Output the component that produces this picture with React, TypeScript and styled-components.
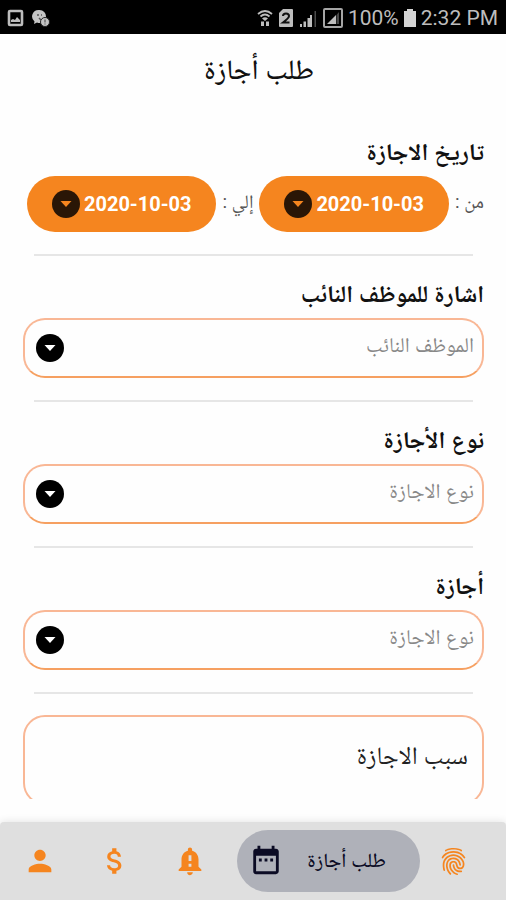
import React from "react";
import styled, { createGlobalStyle } from "styled-components";
import { MdAttachMoney, MdDateRange, MdNotificationImportant, MdPerson } from "react-icons/md";
import { IoFingerPrint } from "react-icons/io5";

const orange = "#f5851f";
const fontStack = `Roboto, "Noto Naskh Arabic", "Noto Sans Arabic", "DejaVu Sans", sans-serif`;

const GlobalStyle = createGlobalStyle`
  *, *::before, *::after { box-sizing: border-box; }
  body { margin: 0; background: #fefefe; font-family: ${fontStack}; color: #111; }
  button, select, textarea { font-family: inherit; margin: 0; }
`;

const Screen = styled.div`
  display: flex;
  flex-direction: column;
  height: 100vh;
  overflow: hidden;
`;

const StatusBar = styled.div`
  flex: none;
  display: flex;
  align-items: center;
  justify-content: space-between;
  height: 34px;
  padding: 2px 8px 0 7px;
  background: #000;
  color: #bdbdbd;
  font-size: 21px;
  line-height: 24px;
`;

const StatusGroup = styled.div<{ $gap: number }>`
  display: flex;
  align-items: center;
  gap: ${(p) => p.$gap}px;
  white-space: nowrap;
  svg { display: block; flex: none; }
`;

const Header = styled.header`
  flex: none;
  padding: 16px 16px 24px 28px;
  text-align: center;
`;

const Title = styled.h1`
  margin: 0;
  font-size: 28px;
  font-weight: 500;
  line-height: 40px;
`;

const Form = styled.main`
  flex: 1;
  min-height: 0;
  overflow-y: auto;
  scrollbar-width: none;
  padding: 0 22px 0 23px;
  margin-bottom: 23px;
`;

const Section = styled.section`
  display: flex;
  flex-direction: column;
  padding-top: 18px;
`;

const Label = styled.label`
  margin-bottom: 4px;
  font-size: 24px;
  font-weight: 700;
  line-height: 40px;
`;

const Divider = styled.hr`
  width: calc(100% - 22px);
  height: 2px;
  margin: 22px auto 0;
  border: 0;
  background: #e6e6e6;
`;

const DateRow = styled.div`
  display: flex;
  align-items: center;
  gap: 6px;
  padding-left: 4px;
`;

const DateLabel = styled.label`
  flex: none;
  padding-bottom: 4px;
  font-size: 19px;
  line-height: 24px;
  color: #555;
`;

const DateButton = styled.button`
  flex: 1;
  display: flex;
  align-items: center;
  justify-content: center;
  gap: 4px;
  direction: ltr;
  height: 56px;
  padding: 0;
  border: 0;
  border-radius: 28px;
  background: ${orange};
  color: #fff;
  font-size: 20px;
  font-weight: 700;
  white-space: nowrap;
`;

const Field = styled.div`
  display: grid;
  align-items: center;
  > * { grid-area: 1 / 1; }
  > svg { justify-self: end; margin-left: 13px; pointer-events: none; }
`;

const Select = styled.select`
  appearance: none;
  width: 100%;
  height: 60px;
  padding: 0 8px 6px 52px;
  border: 2px solid #f9b795;
  border-bottom-color: #f6a061;
  border-radius: 22px;
  background: #fefefe;
  color: #888;
  font-size: 21px;
  line-height: 40px;
`;

const Reason = styled.textarea`
  display: block;
  width: 100%;
  height: 90px;
  margin-top: 21px;
  padding: 21px 14px;
  border: 2px solid #f9b795;
  border-radius: 22px;
  background: #fefefe;
  resize: none;
  font-size: 25px;
  line-height: 36px;
  &::placeholder { color: #222; opacity: 1; }
`;

const NavBar = styled.nav`
  flex: none;
  display: flex;
  align-items: center;
  justify-content: space-between;
  height: 78px;
  padding: 0 38px 0 23px;
  border-radius: 4px 4px 0 0;
  background: #dfdfdf;
  box-shadow: 0 0 8px rgba(0, 0, 0, 0.12);
  direction: ltr;
`;

const NavGroup = styled.div<{ $gap: number }>`
  display: flex;
  align-items: center;
  gap: ${(p) => p.$gap}px;
`;

const NavButton = styled.button`
  display: flex;
  padding: 0;
  border: 0;
  background: none;
  color: ${orange};
`;

const ActiveTab = styled.button`
  display: flex;
  align-items: center;
  gap: 24px;
  height: 62px;
  padding: 0 34px 2px 12px;
  border: 0;
  border-radius: 31px;
  background: #afb1b9;
  color: #0b0b24;
  font-size: 20px;
  font-weight: 500;
  line-height: 28px;
  white-space: nowrap;
`;

const Arrow = ({ disc = "#000", fill = "#fff" }: { disc?: string; fill?: string }) => (
  <svg width="28" height="28" viewBox="0 0 28 28" aria-hidden="true">
    <circle cx="14" cy="14" r="14" fill={disc} />
    <path d="M8.5 11h11L14 17z" fill={fill} />
  </svg>
);

const SelectField = ({ id, label, hint }: { id: string; label: string; hint: string }) => (
  <Section>
    <Label htmlFor={id}>{label}</Label>
    <Field>
      <Select id={id} defaultValue="">
        <option value="">{hint}</option>
      </Select>
      <Arrow />
    </Field>
    <Divider />
  </Section>
);

const PictureIcon = () => (
  <svg width="17" height="18" viewBox="0 0 17 18">
    <rect x="2" y="2" width="13" height="14" rx="1" fill="none" stroke="#bdbdbd" strokeWidth="2.6" />
    <path d="M4 13v-2l2-1 2 1 2-3 3 3v2z" fill="#bdbdbd" />
  </svg>
);

const ChatIcon = () => (
  <svg width="18" height="18" viewBox="0 0 18 18">
    <path d="M7 1a6.5 6.5 0 0 0-4.500 11.500L2 15l3-1.500A6.500 6.500 0 1 0 7 1z" fill="#c4c4c4" />
    <path d="M5 6h2M9 6h1M7 9l2 2" stroke="#555" strokeWidth="1.500" />
    <circle cx="13" cy="13" r="4.500" fill="#c4c4c4" stroke="#222" strokeWidth="1" />
    <path d="M13 10.500v3M13 14.500v1" stroke="#555" strokeWidth="1.200" />
  </svg>
);

const WifiIcon = () => (
  <svg width="16" height="18" viewBox="0 0 16 18" fill="none" stroke="#bdbdbd">
    <path d="M1 5q7-6 14 0M3.500 7.500q4.500-4 9 0" strokeWidth="1.800" />
    <path d="M5 9.500q3-2.500 6 0L8 12z" fill="#bdbdbd" stroke="none" />
    <path d="M5.500 12.500V17M10.500 12.500V17" strokeWidth="3" />
  </svg>
);

const SimIcon = () => (
  <svg width="14" height="18" viewBox="0 0 14 18">
    <path d="M4 0h9a1 1 0 0 1 1 1v16a1 1 0 0 1-1 1H1a1 1 0 0 1-1-1V4z" fill="#bdbdbd" />
    <path d="M4 7q0-2.500 3-2.500t3 2.500q0 2-6 6.500h6.500" fill="none" stroke="#111" strokeWidth="2" />
  </svg>
);

const SignalIcon = () => (
  <svg width="18" height="17" viewBox="0 0 18 17" fill="#bdbdbd">
    <path d="M1 14h2v3H1zM4.500 11.500h2.500V17H4.500zM8.500 8H11v9H8.500z" />
    <path d="M11 5h2v12h-2z" />
    <path d="M15.500 1H17v16h-1.500z" fill="#4a4a4a" />
  </svg>
);

const BoxedSignalIcon = () => (
  <svg width="20" height="20" viewBox="0 0 20 20">
    <rect x="1" y="1" width="18" height="18" rx="1" fill="none" stroke="#a5a5a5" strokeWidth="2" />
    <path d="M4 16L13 7v9z" fill="#bdbdbd" />
    <path d="M13.500 7L16 4v12h-2.500z" fill="#484848" />
  </svg>
);

const BatteryIcon = () => (
  <svg width="12" height="18" viewBox="0 0 12 18">
    <path d="M3 0h6v2h3v16H0V2h3z" fill="#d4d4d4" />
  </svg>
);

export default function App() {
  return (
    <Screen dir="rtl" lang="ar">
      <GlobalStyle />
      <StatusBar dir="ltr">
        <StatusGroup $gap={8}>
          <PictureIcon />
          <ChatIcon />
        </StatusGroup>
        <StatusGroup $gap={5}>
          <StatusGroup $gap={6}>
            <WifiIcon />
            <SimIcon />
            <SignalIcon />
            <BoxedSignalIcon />
          </StatusGroup>
          <span>100%</span>
          <BatteryIcon />
          <span>2:32 PM</span>
        </StatusGroup>
      </StatusBar>

      <Header>
        <Title>طلب أجازة</Title>
      </Header>

      <Form>
        <Section>
          <Label as="div">تاريخ الاجازة</Label>
          <DateRow>
            <DateLabel htmlFor="from">من :</DateLabel>
            <DateButton id="from" type="button">
              <Arrow disc="#2a1606" fill={orange} />
              2020-10-03
            </DateButton>
            <DateLabel htmlFor="to">إلي :</DateLabel>
            <DateButton id="to" type="button">
              <Arrow disc="#2a1606" fill={orange} />
              2020-10-03
            </DateButton>
          </DateRow>
          <Divider />
        </Section>
        <SelectField id="deputy" label="اشارة للموظف النائب" hint="الموظف النائب" />
        <SelectField id="type" label="نوع الأجازة" hint="نوع الاجازة" />
        <SelectField id="leave" label="أجازة" hint="نوع الاجازة" />
        <Reason aria-label="سبب الاجازة" placeholder="سبب الاجازة" />
      </Form>

      <NavBar>
        <NavGroup $gap={41}>
          <NavButton type="button" aria-label="الملف الشخصي"><MdPerson size={34} /></NavButton>
          <NavButton type="button" aria-label="الراتب"><MdAttachMoney size={34} /></NavButton>
          <NavButton type="button" aria-label="التنبيهات"><MdNotificationImportant size={34} /></NavButton>
        </NavGroup>
        <NavGroup $gap={19}>
          <ActiveTab type="button" aria-current="page">
            <MdDateRange size={34} />
            <span dir="rtl">طلب أجازة</span>
          </ActiveTab>
          <NavButton type="button" aria-label="البصمة"><IoFingerPrint size={29} /></NavButton>
        </NavGroup>
      </NavBar>
    </Screen>
  );
}
